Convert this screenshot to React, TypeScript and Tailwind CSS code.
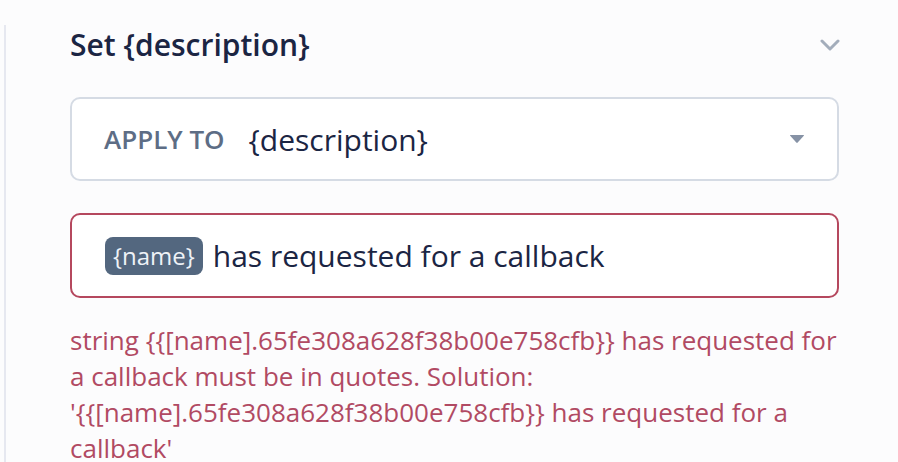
export default function App() {
  return (
    <div
      className="w-[898px] h-[462px] overflow-hidden bg-[#fcfcfd]"
      style={{ fontFamily: '"Open Sans", "Noto Sans", sans-serif' }}
    >
      <div className="ml-[4px] h-full border-l-2 border-[#e6e8f0] pl-[64px] pr-[59px]">
        {/* header */}
        <div className="mt-[25px] h-[40px] flex items-center justify-between">
          <h2 className="text-[30px] leading-[40px] font-semibold text-[#1b2543]">
            Set {'{description}'}
          </h2>
          <svg width="20" height="12" viewBox="0 0 20 12" className="mr-[-1px]">
            <path
              d="M2 2 L10 10 L18 2"
              fill="none"
              stroke="#a3adbb"
              strokeWidth="3"
              strokeLinecap="round"
              strokeLinejoin="round"
            />
          </svg>
        </div>

        {/* apply to select */}
        <div className="mt-[32px] h-[84px] rounded-[10px] border-2 border-[#d5dbe4] bg-white flex items-center pl-[32px] pr-[32px]">
          <span className="text-[26px] font-semibold text-[#5d6d85]">APPLY TO</span>
          <span className="ml-[24px] text-[30px] text-[#1b2543]">{'{description}'}</span>
          <svg width="16" height="10" viewBox="0 0 16 10" className="ml-auto">
            <path
              d="M1.5 1 L14.5 1 Q15.5 1 14.8 1.8 L8.7 8.6 Q8 9.3 7.3 8.6 L1.2 1.8 Q0.5 1 1.5 1 Z"
              fill="#8692a5"
            />
          </svg>
        </div>

        {/* value input */}
        <div className="mt-[32px] h-[85px] rounded-[10px] border-2 border-[#b5485e] bg-white flex items-center pl-[33px]">
          <span className="h-[38px] px-[8px] rounded-[8px] bg-[#53677f] text-[#eef2f7] text-[24px] leading-[38px]">
            {'{name}'}
          </span>
          <span className="ml-[10px] text-[30px] text-[#1b2543]">
            has requested for a callback
          </span>
        </div>

        {/* error */}
        <p className="mt-[24px] text-[26px] leading-[36px] text-[#b14a63]">
          string {'{{[name].65fe308a628f38b00e758cfb}}'} has requested for a callback must be
          in quotes. Solution: '{'{{[name].65fe308a628f38b00e758cfb}}'} has requested for a
          callback'
        </p>
      </div>
    </div>
  );
}
